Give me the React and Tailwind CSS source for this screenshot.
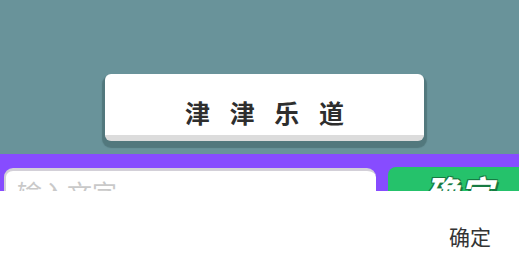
export default function App() {
  return (
    <div className="w-[519px] h-[266px] overflow-hidden bg-white font-['Noto_Sans_CJK_SC',sans-serif]">
      {/* stage */}
      <div className="h-[154px] bg-[#69939a] pt-[74px] pl-[105px]">
        <div className="w-[319px] h-[67px] bg-white rounded-[6px] border-b-[6px] border-[#dcdcdc] [box-shadow:0_4px_1px_3px_#52787d] flex items-center justify-center pt-[16px]">
          <span className="text-[25px] leading-none font-bold text-[#2e2e2e] tracking-[7px] pl-[7px]">
            津 津 乐 道
          </span>
        </div>
      </div>

      {/* input bar */}
      <div className="h-[37px] bg-[#874cff] overflow-hidden flex items-start">
        <div className="ml-[4px] mt-[14px] w-[372px] h-[44px] bg-white rounded-[9px] border-t-[3px] border-l-[2px] border-[#d3d0d8] pl-[11px] pt-[9px]">
          <span className="text-[25px] leading-none text-[#c9c9c9]">输入文字</span>
        </div>
        <div className="ml-[12px] mt-[13px] flex-1 h-[44px] bg-[#25c26b] rounded-l-[8px] pl-[37px] pt-[8px]">
          <span className="text-[33px] leading-none font-black italic text-white tracking-[2px] [text-shadow:2px_2px_0_#177a42,-1px_-1px_0_#177a42,1px_-1px_0_#177a42,-1px_1px_0_#177a42]">
            确定
          </span>
        </div>
      </div>

      {/* keyboard accessory */}
      <div className="h-[75px] bg-white flex justify-end items-center pt-[16px] pr-[28px]">
        <span className="text-[21px] leading-none text-[#333]">确定</span>
      </div>
    </div>
  );
}
